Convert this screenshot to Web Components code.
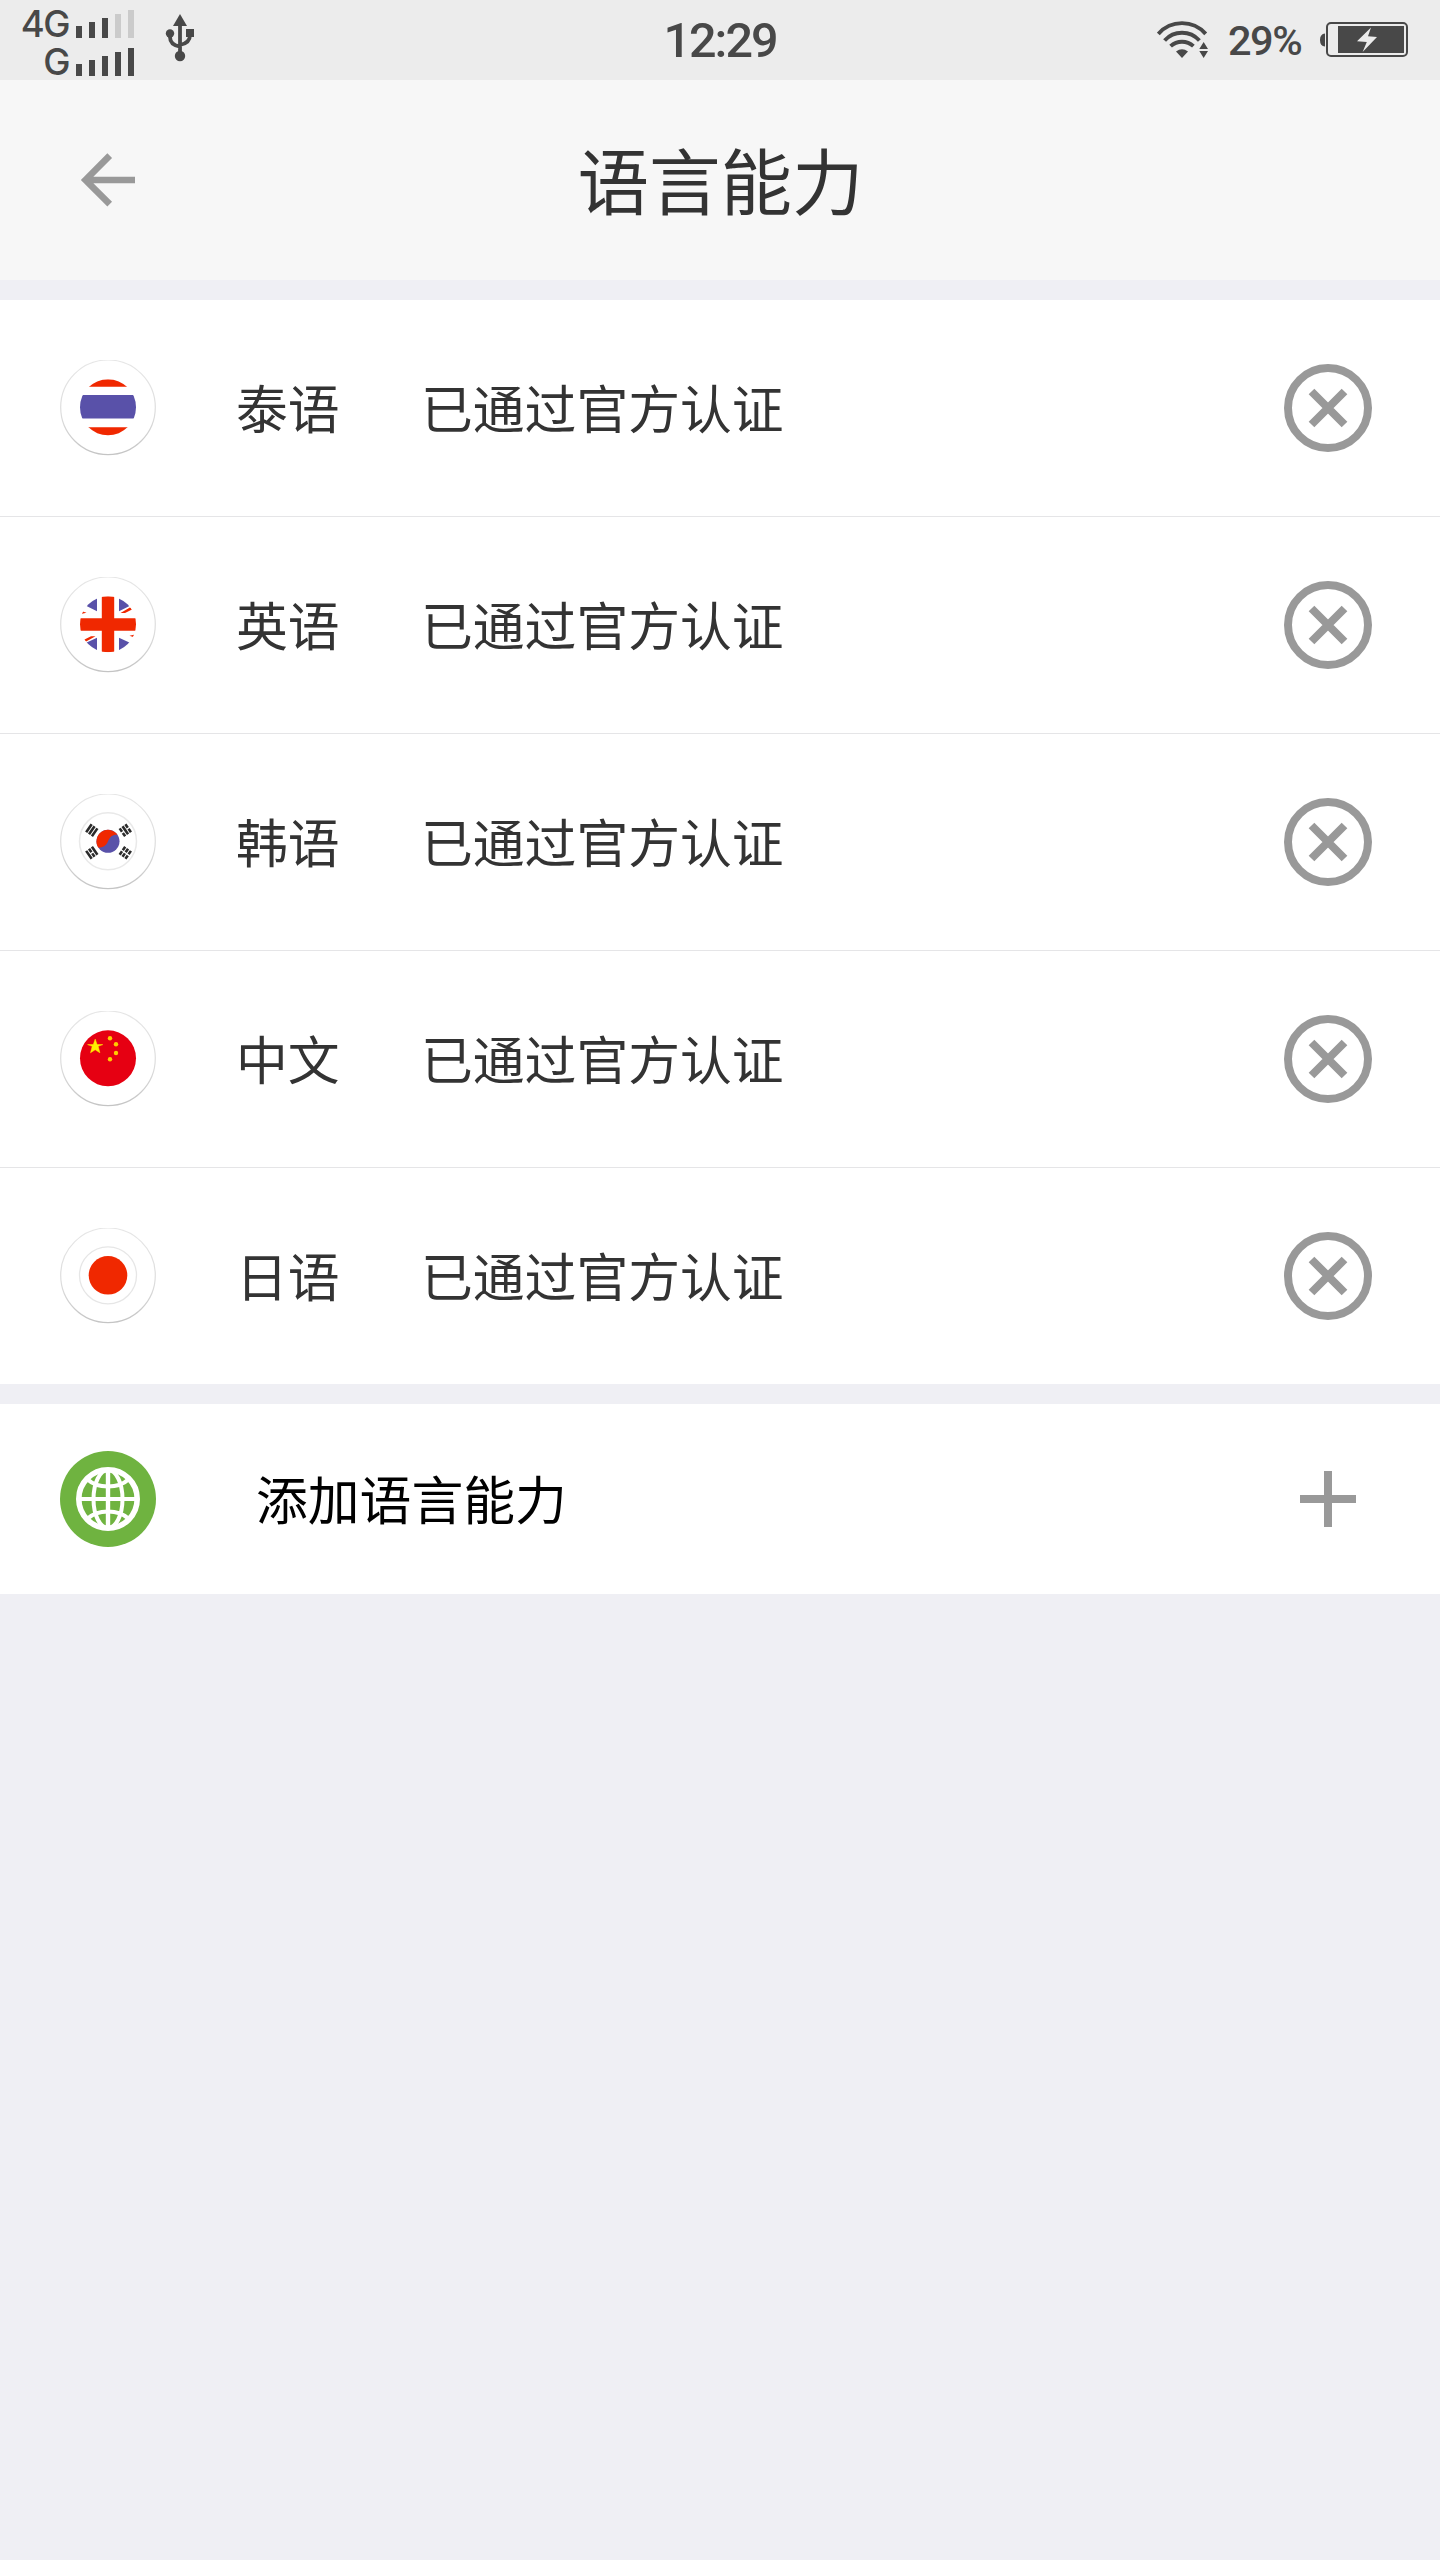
<!DOCTYPE html>
<html lang="zh-CN">
<head>
<meta charset="utf-8">
<title>语言能力</title>
<style>
html,body{margin:0;padding:0;background:#efeff4}
body{font-family:"Noto Sans CJK SC",sans-serif;color:#333}
</style>
</head>
<body>
<language-page></language-page>
<script>
function define(name, html, setup) {
  customElements.define(name, class extends HTMLElement {
    constructor() {
      super();
      const t = document.createElement('template');
      t.innerHTML = html;
      this.attachShadow({mode: 'open'}).appendChild(t.content.cloneNode(true));
    }
    connectedCallback() { if (setup) setup(this, this.shadowRoot); }
  });
}

define('signal-bars', `
<style>
:host{display:flex;align-items:flex-end;gap:7px;height:28px}
i{display:block;width:6px;background:#484848}
i.off{background:#cbcbcb}
i:nth-of-type(1){height:12px}i:nth-of-type(2){height:16px}i:nth-of-type(3){height:20px}i:nth-of-type(4){height:24px}i:nth-of-type(5){height:28px}
</style><i></i><i></i><i></i><i></i><i></i>`, (el, root) => {
  const level = +el.getAttribute('level');
  root.querySelectorAll('i').forEach((b, n) => b.classList.toggle('off', n >= level));
});

define('status-bar', `
<style>
:host{display:grid;grid-template-columns:1fr auto 1fr;height:80px;background:#ececec;color:#484848;font-family:Roboto,sans-serif;font-weight:500}
.left{display:flex;align-items:flex-start;padding-left:23px}
.sims{display:flex;flex-direction:column;gap:10px;padding-top:10px;width:111px}
.sim{display:flex;justify-content:flex-end;align-items:flex-end;gap:7px;height:28px}
.sim span{font:500 36.5px/28px Inter,sans-serif;letter-spacing:-1.500px}
.usb{margin:13px 0 0 31px}
.time{font-size:48.500px;line-height:80px;height:80px;padding-top:1px;box-sizing:border-box;letter-spacing:-2px}
.right{display:flex;justify-content:flex-end;align-items:flex-start;padding-right:31px}
.pct{font-size:41.500px;line-height:81px;letter-spacing:-1.500px;width:91px;margin-left:19px}
svg{display:block;flex:none}
.wifi,.bat{margin-top:20px}
</style>
<div class="left">
 <div class="sims">
  <div class="sim"><span>4G</span><signal-bars level="3"></signal-bars></div>
  <div class="sim"><span>G</span><signal-bars level="5"></signal-bars></div>
 </div>
 <svg class="usb" width="30" height="50" viewBox="165 13 30 50" fill="#484848">
  <path d="M180 14l7 12h-14z"/><circle cx="180" cy="56" r="5.2"/><circle cx="170" cy="33.5" r="4.2"/><path d="M186 29h8v8h-8z"/>
  <path d="M180 24v30M170 34v3q0 8 10 9.500M190 34v1q0 8-10 10" fill="none" stroke="#484848" stroke-width="3.8"/>
 </svg>
</div>
<div class="time">12:29</div>
<div class="right">
 <svg class="wifi" width="52" height="40" viewBox="17 20 52 40">
  <g fill="none" stroke="#484848" stroke-width="3.9"><path d="M18.300 33.900A31.500 31.500 0 0 1 65.700 33.900M24.600 40.500A23.400 23.400 0 0 1 59.400 40.500M30.600 46.200A16.700 16.700 0 0 1 53.400 46.200"/></g>
  <path d="M36 51.500Q42 47 48 51.500L42 58zM59.300 49h8.700l-4.350-7zM59.300 51h8.700l-4.350 7z" fill="#484848"/>
 </svg>
 <div class="pct">29%</div>
 <svg class="bat" width="90" height="40" viewBox="179 20 90 40">
  <rect x="187" y="23" width="80" height="33" rx="4" fill="none" stroke="#484848" stroke-width="2"/>
  <path d="M198 26h66v27h-66zM185 33.500v13q-5-.5-5-6.500t5-6.500z" fill="#484848"/>
  <path d="M231 27.500L217 41.300l9.800.7-4.200 10L237 37l-9-.7z" fill="#ececec"/>
 </svg>
</div>`);

define('title-bar', `
<style>
:host{display:grid;grid-template-columns:1fr auto 1fr;height:200px;background:#f7f7f7;align-items:center}
svg{display:block;margin-left:80px}
h1{margin:0 0 4px;padding-left:1px;font-size:71.500px;font-weight:400;line-height:100px;color:#333}
</style>
<svg width="56" height="60" viewBox="80 150 56 60" fill="none" stroke="#999" stroke-width="6.600"><path d="M135 180H86M109.700 155.700L85.500 180l24.200 24.200"/></svg>
<h1><slot></slot></h1>`);

const flags = {
  th: `<clipPath id="c"><circle r="28"/></clipPath><g clip-path="url(#c)"><path d="M-28-28h56v7.500h-56zM-28 20h56v9h-56z" fill="#f02800"/><path d="M-28-12.300h56v23.500h-56z" fill="#5951a9"/></g>`,
  gb: `<clipPath id="c"><circle r="28"/></clipPath><g clip-path="url(#c)"><g fill="#5951a9"><path d="M-11-28v15L-23-19zM11-28v15L23-19zM-11 28v-14.500L-23 19zM11 28v-14.500L23 19z"/></g><path d="M-6.200-28H6.200V-6H28V6.500H6.200V28H-6.200V6.500H-28V-6H-6.200zM12.500-11.200h4.500L24-14.800l-1.700-2.200zM-12.500 12h-4.500L-24 15.500l1.700 2zM-26-13l4.500 1.500-4.500 1zM26 13l-4.500-1.500 4.500-1z" fill="#f02800"/></g>`,
  kr: `<circle r="28.500" fill="#fff" stroke="#e9e9e9" stroke-width="1.500"/><circle r="11.500" fill="#5951a9"/><path d="M-9.500 6.500A11.500 11.500 0 0 1 9.500-6.500C5-7 2-5 0 0S-5 6-9.500 6.500z" fill="#f02800"/>
   <g stroke="#2b2b2b" stroke-width="2.600"><g transform="translate(-16.200 -11) rotate(35)"><path d="M-3.500-4.800V4.800M0-4.800V4.800M3.500-4.800V4.800"/></g><g transform="translate(17.300 -11) rotate(-35)"><path d="M-3.500-4.800v4.100M-3.500.7v4.100M0-4.800V4.800M3.500-4.800v4.100M3.500.7v4.100"/></g><g transform="translate(-16.200 11.500) rotate(-35)"><path d="M-3.500-4.800V4.800M0-4.800v4.100M0 .7v4.100M3.500-4.800V4.800"/></g><g transform="translate(17.300 11.500) rotate(35)"><path d="M-3.500-4.800v4.100M-3.500.7v4.100M0-4.800v4.100M0 .7v4.100M3.500-4.800v4.100M3.500.7v4.100"/></g></g>`,
  cn: `<circle r="28" fill="#e60012"/><path transform="translate(-12.800 -11)" d="M0-8.200l1.900 5.500h5.700L3-1 4.700 5.500 0 2.500-4.700 5.500-3-1l-4.600-1.700h5.700z" fill="#fff000" stroke="#fff000" stroke-width=".5"/><g fill="#fc0"><circle cx="2" cy="-20" r="2.200"/><circle cx="8" cy="-14" r="2.200"/><circle cx="8" cy="-5.300" r="2.200"/><circle cx="2" cy="1" r="2.200"/></g>`,
  jp: `<circle r="28.500" fill="#fff" stroke="#e6e6e6" stroke-width="1.300"/><circle r="19.300" fill="#f02800"/>`
};

define('flag-badge', `
<style>:host{display:block;width:96px;height:96px}svg{display:block}</style>
<svg width="96" height="96" viewBox="-48 -48 96 96">
<defs><linearGradient id="rim" x1="0" y1="0" x2="0" y2="1"><stop offset="0" stop-color="#e6e6e6"/><stop offset=".6" stop-color="#dcdcdc"/><stop offset="1" stop-color="#c4c4c4"/></linearGradient></defs>
<circle r="47.300" cy="-.7" fill="#fff" stroke="url(#rim)" stroke-width="1.200"/><g id="flag" transform="translate(0 -.7)"></g></svg>`,
(el, root) => { root.getElementById('flag').innerHTML = flags[el.getAttribute('code')] || ''; });

define('language-row', `
<style>
:host{display:flex;align-items:center;box-sizing:border-box;height:217px;padding:0 68px 0 60px;background:#fff;border-bottom:1px solid #e5e5e7;font-size:51.800px;line-height:76px;color:#333}
:host([last]){height:216px;border-bottom:0}
.name{width:185px;margin-left:80px}
.state{flex:1}
.name,.state{white-space:nowrap;padding-bottom:3px}
svg{display:block}
</style>
<flag-badge></flag-badge><span class="name"><slot></slot></span><span class="state"><slot name="state"></slot></span>
<svg width="88" height="88" viewBox="-44 -44 88 88" fill="none" stroke="#999" stroke-width="8"><circle r="40"/><path d="M-16.500-16.500l33 33M16.500-16.500l-33 33"/></svg>`,
(el, root) => {
  const badge = document.createElement('flag-badge');
  badge.setAttribute('code', el.getAttribute('flag'));
  root.querySelector('flag-badge').replaceWith(badge);
});

define('add-row', `
<style>
:host{display:flex;align-items:center;height:190px;padding:0 84px 0 60px;background:#fff;font-size:51.800px;line-height:76px;color:#000}
span{flex:1;margin-left:100px;padding-bottom:3px}
svg{display:block}
</style>
<svg width="96" height="96" viewBox="-48 -48 96 96"><circle r="48" fill="#6fb340"/><g fill="none" stroke="#fff"><circle r="29.200" stroke-width="5.600"/><ellipse rx="14.500" ry="29" stroke-width="4"/><path d="M0-29V29" stroke-width="4.400"/><path d="M-29 0H29M-21-20Q-13-12.500 0-12.500T21-20M-21 20Q-13 12.500 0 12.500T21 20" stroke-width="4"/></g></svg>
<span><slot></slot></span>
<svg width="56" height="56" viewBox="-28 -28 56 56"><path d="M-28 0H28M0-28V28" stroke="#999" stroke-width="8"/></svg>`);

define('language-page', `
<style>
:host{display:flex;flex-direction:column;min-height:2560px;background:#efeff4}
.list{display:flex;flex-direction:column;margin:20px 0}
</style>
<status-bar></status-bar>
<title-bar>语言能力</title-bar>
<div class="list">
<language-row flag="th">泰语<span slot="state">已通过官方认证</span></language-row>
<language-row flag="gb">英语<span slot="state">已通过官方认证</span></language-row>
<language-row flag="kr">韩语<span slot="state">已通过官方认证</span></language-row>
<language-row flag="cn">中文<span slot="state">已通过官方认证</span></language-row>
<language-row flag="jp" last>日语<span slot="state">已通过官方认证</span></language-row>
</div>
<add-row>添加语言能力</add-row>`);
</script>
</body>
</html>
